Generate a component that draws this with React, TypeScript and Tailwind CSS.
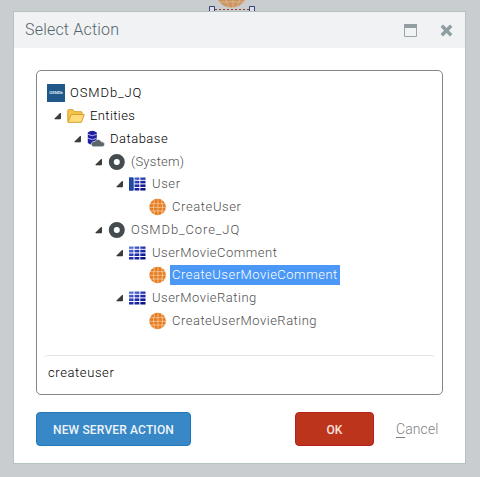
import React from 'react';

const globeLines = 'M1 5.7H17M0 9.3H18M1 13H17M5.5 1.5Q3.4 9 5.5 16.5M9 0V18M12.5 1.5Q14.6 9 12.5 16.5';

function Globe() {
  return (
    <svg className="h-[18px] w-[18px]" viewBox="0 0 18 18" fill="none">
      <circle cx="8.6" cy="9" r="8.3" fill="#e57c1f" />
      <path d={globeLines} stroke="#fbe1c7" strokeWidth=".6" />
    </svg>
  );
}

function Logo() {
  return (
    <div className="flex h-[18px] w-[18px] items-center justify-center overflow-hidden bg-[#205889]">
      <span className="text-[4px] leading-none font-bold text-[#d9e7f0]">OSMDb</span>
    </div>
  );
}

function Folder() {
  return (
    <svg className="h-[18px] w-[18px]" viewBox="0 0 18 18">
      <path d="M.8 14.5V3.5Q.8 2.7 1.6 2.7H6L7.7 4.7H14.2Q15 4.7 15 5.5V8" fill="#f5c54b" stroke="#d49f2d" />
      <path d="M1 15.3 4.2 7.5H17.3L14.4 15.3Z" fill="#ffdc78" stroke="#d5a12f" strokeLinejoin="round" />
    </svg>
  );
}

function Database() {
  return (
    <svg className="h-[18px] w-[18px]" viewBox="0 0 18 18">
      <path d="M.8 2.6Q5.2-.9 9.8 2.6V13Q5.2 16.5 .8 13Z" fill="#2020a0" />
      <path d="M1 4.3Q5.2 7.2 9.8 4.3M1 8.2Q5.2 11.1 9.8 8.2" fill="none" stroke="#b9b9ef" strokeWidth="1" />
      <path d="M6.2 16.8A2.7 2.7 0 0 1 6 11.7Q7.2 11.1 8 11.5C9 8.7 13.2 8.8 14 11.6Q17.7 11.7 17.6 14.4Q17.5 16.8 15.2 16.8Z" fill="#5a6669" stroke="#fff" strokeWidth=".6" />
    </svg>
  );
}

function Module() {
  return (
    <svg className="h-[18px] w-[18px]" viewBox="0 0 18 18">
      <circle cx="8.8" cy="9" r="5.5" fill="none" stroke="#454c50" strokeWidth="5" />
    </svg>
  );
}

function Table({ system = false }: { system?: boolean }) {
  return (
    <svg className="h-[18px] w-[18px]" viewBox="0 0 18 18">
      <defs>
        <linearGradient id="tableBlue" x2="1" y2="1">
          <stop stopColor="#6486df" />
          <stop offset=".5" stopColor="#222fae" />
          <stop offset="1" stopColor="#080879" />
        </linearGradient>
      </defs>
      <rect x="0" y="2.5" width="16.5" height="13" fill="url(#tableBlue)" />
      <path d="M5 2V16M10.8 2V16M5 5.3H17M5 8.9H17M5 12.5H17" stroke="#fff" strokeWidth="1" />
      {!system && <path d="M0 5.3H6M0 8.9H6M0 12.5H6" stroke="#fff" strokeWidth="1" />}
      {system && <path d="M.4 2.9H4V15.1H.4Z" fill="#2350a6" stroke="#13358c" strokeWidth=".7" />}
    </svg>
  );
}

function Arrow() {
  return (
    <svg className="h-[18px] w-[12px]" viewBox="0 0 12 18">
      <path d="M.8 11.8 6.4 6.2V11.8Z" fill="#404040" stroke="#111" strokeWidth=".8" />
    </svg>
  );
}

const rows = [
  { label: 'OSMDb_JQ', icon: <Logo />, arrow: false, indent: 'pl-0', text: 'text-[#000] tracking-[0.9px]' },
  { label: 'Entities', icon: <Folder />, arrow: true, indent: 'pl-[20px]', text: 'text-[#000] tracking-[0.4px]' },
  { label: 'Database', icon: <Database />, arrow: true, indent: 'pl-[40px]', text: 'text-[#000] tracking-[0.5px]' },
  { label: '(System)', icon: <Module />, arrow: true, indent: 'pl-[61px]', text: 'text-[#505050] tracking-[0.25px]' },
  { label: 'User', icon: <Table system />, arrow: true, indent: 'pl-[82px]', text: 'text-[#505050] tracking-[0.6px]' },
  { label: 'CreateUser', icon: <Globe />, arrow: false, indent: 'pl-[102px]', text: 'text-[#505050] tracking-[0.6px]' },
  { label: 'OSMDb_Core_JQ', icon: <Module />, arrow: true, indent: 'pl-[61px]', text: 'text-[#505050] tracking-[0.9px]' },
  { label: 'UserMovieComment', icon: <Table />, arrow: true, indent: 'pl-[82px]', text: 'text-[#505050] tracking-[0.5px]' },
  { label: 'CreateUserMovieComment', icon: <Globe />, arrow: false, indent: 'pl-[102px]', text: 'bg-[#4b98f7] text-white tracking-[0.5px]' },
  { label: 'UserMovieRating', icon: <Table />, arrow: true, indent: 'pl-[82px]', text: 'text-[#505050] tracking-[0.5px]' },
  { label: 'CreateUserMovieRating', icon: <Globe />, arrow: false, indent: 'pl-[102px]', text: 'text-[#505050] tracking-[0.5px]' },
];

export default function App() {
  return (
    <div className="relative h-[477px] w-[480px] overflow-hidden bg-[#cacdd0] pt-[11px] pl-[13px] font-['Roboto',sans-serif]">
      <svg className="absolute top-0 left-[206px] h-[11px] w-[52px]" viewBox="0 0 52 11">
        <circle cx="25.5" cy="-8" r="15.5" fill="#cc945f" />
        <path d="M11 2H40M20 0Q21 5 24 8M27 0V8M34 0Q32 5 29 8" fill="none" stroke="#dfc2a5" strokeWidth=".7" />
        <path d="M9 9.5H43" stroke="#923c3c" strokeDasharray="2 2" />
        <path d="M3.5 11V6.5H8.5V11M43.5 11V6.5H48.5V11" fill="#dce0ec" stroke="#354274" />
      </svg>
      <main className="relative flex h-[453px] w-[453px] flex-col border border-[#b7c1c2] bg-white">
        <header className="flex h-[36px] shrink-0 items-center justify-between bg-[#f0f2f4] pr-[12px] pl-[11px]">
          <h1 className="text-[16px] leading-[20px] font-light tracking-[0.2px] text-[#56656b]">Select Action</h1>
          <div className="flex items-center gap-[23px]">
            <svg className="h-[13px] w-[13px]" viewBox="0 0 13 13"><path d="M.5.5H12.5V12.5H.5Z" fill="none" stroke="#98a6a9" /><path d="M0 0H13V4H0Z" fill="#929ea2" /></svg>
            <svg className="h-[13px] w-[13px]" viewBox="0 0 13 13"><path d="M1.8 1.8 11.2 11.2M11.2 1.8 1.8 11.2" stroke="#8e9da1" strokeWidth="3.4" /></svg>
          </div>
        </header>
        <section className="mt-[22px] ml-[22px] flex h-[325px] w-[407px] shrink-0 flex-col rounded-[5px] border border-[#858585]">
          <div className="h-[284px] pt-[11px] pl-[10px]">
            {rows.map((row) => (
              <div key={row.label} className={`flex h-[22.75px] items-center ${row.indent}`}>
                {row.arrow && <div className="-ml-[13px] w-[13px] shrink-0"><Arrow /></div>}
                <div className="shrink-0">{row.icon}</div>
                <span className={`ml-[3px] h-[20px] px-[2px] text-[13px] leading-[20px] font-light whitespace-nowrap ${row.text}`}>{row.label}</span>
              </div>
            ))}
          </div>
          <div className="mx-[7px] h-[39px] rounded-[4px] border-t border-[#e5e5e5] px-[4px] pt-[7px] text-[13px] leading-[20px] font-light tracking-[0.6px] text-black">createuser</div>
        </section>
        <footer className="mt-[17px] flex h-[34px] items-center pl-[22px]">
          <button className="h-[34px] w-[155px] rounded-[4px] border border-[#2378b9] bg-[#3887c6] pt-px text-[12px] font-medium tracking-[0.15px] text-[#eef5fb]">NEW SERVER ACTION</button>
          <button className="ml-[104px] h-[34px] w-[79px] rounded-[4px] border border-[#b8201d] bg-[#bd341d] pt-px text-[12px] font-medium text-[#f9e4de]">OK</button>
          <button className="ml-[22px] pt-px text-[14px] font-light tracking-[0.1px] text-[#7f7f7f]"><span className="underline underline-offset-[3px]">C</span>ancel</button>
        </footer>
      </main>
    </div>
  );
}
